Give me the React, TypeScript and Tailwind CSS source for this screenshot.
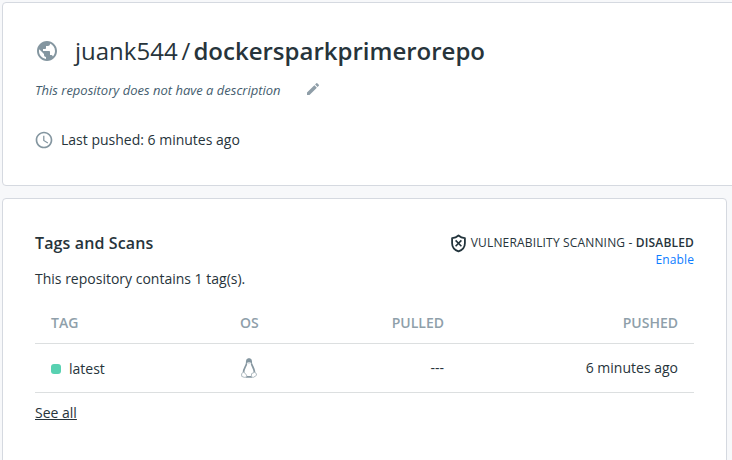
import { MdAccessTime, MdEdit, MdPublic } from "react-icons/md";

function ShieldOff() {
  return (
    <svg width="17" height="19" viewBox="0 0 17 19" fill="none" stroke="#22343c" className="shrink-0">
      <path d="M8.5 1.5 C6.8 3 4.5 3.9 2.1 4.1 V9.2 C2.1 13 4.6 16 8.5 17.4 C12.4 16 14.9 13 14.9 9.2 V4.1 C12.5 3.9 10.2 3 8.5 1.5 Z" strokeWidth="1.8" strokeLinejoin="round" />
      <path d="M5.6 6.4 L11.4 12.2 M11.4 6.4 L5.6 12.2" strokeWidth="1.6" />
    </svg>
  );
}

function Penguin() {
  return (
    <svg width="16" height="20" viewBox="0 0 16 20" fill="none">
      <path d="M5.5 5.5 C5.4 8 2.7 10 2.5 14.5 L5.4 18.8 H10.6 L13.5 14.5 C13.3 10 10.8 8 10.5 5.5" fill="#fff" stroke="#8797a1" strokeWidth="1.7" />
      <path d="M5 6.4 C4.6 2.2 5.4 0.2 8 0.2 C10.6 0.2 11.4 2.2 11 6.4 L9.8 4.8 H6.4 Z" fill="#8597a1" />
      <path d="M6.2 4.8 L8 3.9 L9.9 4.8 L8 6.2 Z" fill="#d6dde1" />
      <path d="M2.4 14.3 C3.8 14.5 4.6 16 5.6 17.2 C6 18.8 4.6 19.6 3.2 19.3 L0.7 18.4 L0.6 15.6 Z" fill="#fff" stroke="#b0bbc1" strokeWidth="1" />
      <path d="M13.5 14.3 L10.6 15.6 C10 18.5 11 19.7 12.6 19.3 L15.4 17.4 V15.6 Z" fill="#fff" stroke="#b0bbc1" strokeWidth="1" />
    </svg>
  );
}

function RepositoryHeader() {
  return (
    <section className="ml-0.5 h-[184px] w-[760px] rounded-sm border border-[#d5d9e0] bg-white pt-8 pl-8">
      <h1 className="flex h-8 items-center text-2xl leading-8 font-normal whitespace-pre">
        <MdPublic className="mr-4 size-6 shrink-0 text-[#8496a0]" />
        <span>juank544</span>
        <span className="mr-[3px] ml-1">/</span>
        <span className="font-semibold">dockersparkprimerorepo</span>
      </h1>
      <div className="mt-3.5 flex h-5 items-center text-[13px] text-[#445d6e]">
        <em>This repository does not have a description</em>
        <MdEdit className="mb-1 ml-6 size-4 text-[#8f9ea8]" />
      </div>
      <div className="mt-[29px] flex h-5 items-center text-sm">
        <MdAccessTime className="mr-[7px] -ml-px size-5 text-[#8496a0]" />
        Last pushed: 6 minutes ago
      </div>
    </section>
  );
}

function TagsTable() {
  return (
    <table className="mt-[11px] w-full table-fixed text-sm leading-5">
      <thead>
        <tr className="h-[43px] border-b border-[#dcdfe0] text-[#8f9faa]">
          <th className="w-[189px] px-4 pt-1 text-left font-semibold">TAG</th>
          <th className="w-[90px] px-4 pt-1 text-left font-semibold">OS</th>
          <th className="w-[147px] pt-1 pr-[17px] text-right font-semibold">PULLED</th>
          <th className="px-4 pt-1 text-right font-semibold">PUSHED</th>
        </tr>
      </thead>
      <tbody>
        <tr className="h-[49px] border-b border-[#dcdfe0]">
          <td className="px-4">
            <span className="flex items-center gap-2 pt-0.5">
              <span className="size-2.5 rounded-[3px] bg-[#58d1b1]" />
              latest
            </span>
          </td>
          <td className="px-[17px]"><Penguin /></td>
          <td className="pr-[17px] text-right">---</td>
          <td className="px-4 text-right">6 minutes ago</td>
        </tr>
      </tbody>
    </table>
  );
}

function TagsAndScans() {
  return (
    <section className="mt-3 ml-0.5 h-[300px] w-[725px] rounded-sm border border-[#d5d9e0] bg-white px-8 pt-8">
      <div className="flex justify-between">
        <div>
          <h2 className="text-base leading-6 font-semibold tracking-[0.13px]">Tags and Scans</h2>
          <p className="mt-3.5 h-5 text-sm leading-5">This repository contains 1 tag(s).</p>
        </div>
        <div className="pt-[3px] text-right text-xs">
          <div className="flex h-[18px] items-center gap-1">
            <ShieldOff />
            <span className="tracking-[0.16px]">VULNERABILITY SCANNING - <span className="font-semibold">DISABLED</span></span>
          </div>
          <a className="block leading-4 tracking-[0.1px] text-[#0b7cff]">Enable</a>
        </div>
      </div>
      <TagsTable />
      <a className="mt-2.5 inline-block text-sm leading-5 underline">See all</a>
    </section>
  );
}

export default function App() {
  return (
    <main className="h-[460px] w-[732px] overflow-hidden bg-[#f7f8fa] pt-0.5 font-['Open_Sans',sans-serif] text-[#27343b]">
      <RepositoryHeader />
      <TagsAndScans />
    </main>
  );
}
